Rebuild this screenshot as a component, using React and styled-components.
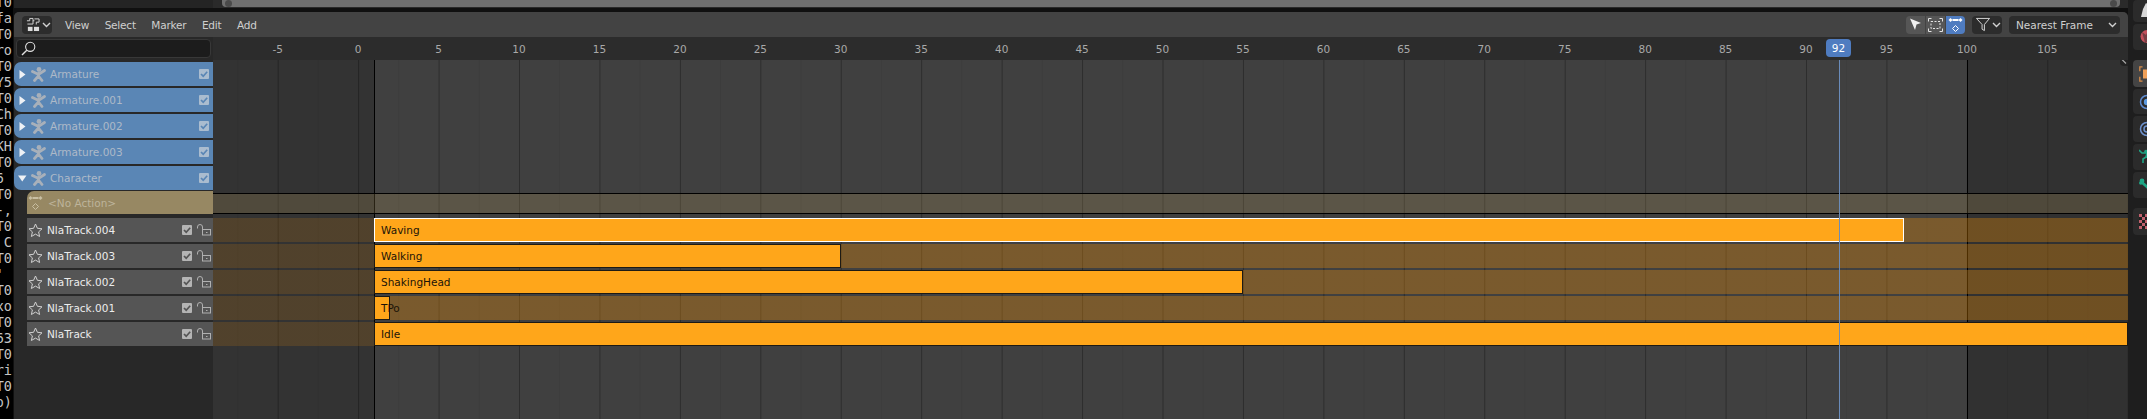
import React from 'react';
import styled, { createGlobalStyle } from 'styled-components';

const FRAME = 16.09;
const RANGE_START = 161;
const RANGE_END = 1754;

const GlobalStyle = createGlobalStyle`
  html, body {
    margin: 0;
    background: #000;
    overflow: hidden;
  }
`;

const Page = styled.div`
  display: flex;
  width: 2147px;
  height: 419px;
  overflow: hidden;
  font-family: 'DejaVu Sans', sans-serif;
  font-size: 10.5px;
  background: #101010;
`;

const Terminal = styled.div`
  flex: 0 0 13px;
  margin-top: -6px;
  overflow: hidden;
  background: #000;
  font-family: 'DejaVu Sans Mono', monospace;
  font-size: 13.5px;
  line-height: 16px;
  color: #c4c4c4;
`;

const TermLine = styled.div`
  display: flex;
  justify-content: flex-end;
  padding-right: 1px;
  white-space: pre;
  color: ${(p) => p.$color || 'inherit'};
`;

const Workspace = styled.div`
  flex: 0 0 2115px;
  display: flex;
  flex-direction: column;
  padding-left: 1px;
  box-sizing: border-box;
`;

const TopStrip = styled.div`
  flex: 0 0 8px;
  display: flex;
  background: #2a2a2a;
  margin-bottom: 4px;
`;

const TopStripLeft = styled.div`
  flex: 0 0 199px;
  background: #242424;
`;

const ScrollTrack = styled.div`
  flex: 1;
  padding: 0 8px 1px 9px;
`;

const ScrollPill = styled.div`
  display: flex;
  justify-content: space-between;
  align-items: center;
  height: 7px;
  padding: 0 3px;
  background: #707070;
  border-radius: 0 0 4px 4px;
`;

const ScrollHandle = styled.span`
  width: 7px;
  height: 7px;
  border-radius: 50%;
  background: #4a4a4a;
`;

const Editor = styled.div`
  flex: 1;
  display: flex;
  flex-direction: column;
  min-height: 0;
  border-radius: 5px 5px 0 0;
  overflow: hidden;
  background: #282828;
`;

const Header = styled.header`
  flex: 0 0 25px;
  display: flex;
  align-items: center;
  justify-content: space-between;
  padding: 0 8px;
  background: #434343;
`;

const HeaderGroup = styled.div`
  display: flex;
  align-items: center;
`;

const DarkButton = styled.div`
  display: flex;
  align-items: center;
  gap: 2px;
  height: 18px;
  padding: 0 1px 0 4px;
  border-radius: 4px;
  background: #2c2c2c;
  color: #d0d0d0;
`;

const Menu = styled.nav`
  display: flex;
  gap: 15.5px;
  margin-left: 13px;
  letter-spacing: -0.2px;
  color: #cfcfcf;
`;

const ModeGroup = styled.div`
  display: flex;
  gap: 1px;
  margin-right: 7px;
`;

const ModeButton = styled.div`
  width: 19px;
  height: 18px;
  display: flex;
  align-items: center;
  justify-content: center;
  background: ${(p) => (p.$active ? '#4f7cc0' : '#565656')};
  border-radius: ${(p) => (p.$first ? '4px 0 0 4px' : p.$last ? '0 4px 4px 0' : '0')};
`;

const Dropdown = styled(DarkButton)`
  width: 111px;
  box-sizing: border-box;
  justify-content: space-between;
  margin-left: 7px;
  padding: 0 3px 0 7px;
`;

const Main = styled.div`
  flex: 1;
  min-height: 0;
  display: grid;
  grid-template-columns: 199px 1fr;
  grid-template-rows: 23px 1fr;
`;

const SearchCell = styled.div`
  padding: 2px;
  background: #282828;
`;

const SearchField = styled.div`
  display: flex;
  align-items: center;
  box-sizing: border-box;
  height: 19px;
  padding-left: 4px;
  background: #1c1c1c;
  border: 1px solid #383838;
  border-radius: 4px;
`;

const Ruler = styled.div`
  position: relative;
  display: flex;
  padding-left: 24.5px;
  overflow: hidden;
  background: #2c2c2c;
`;

const RulerLabel = styled.span`
  flex: 0 0 ${FRAME * 5}px;
  display: flex;
  align-items: center;
  justify-content: center;
  color: #a9a9a9;
`;

const FrameBadge = styled.div`
  position: absolute;
  left: 1613px;
  top: 2px;
  width: 25px;
  height: 18px;
  display: flex;
  align-items: center;
  justify-content: center;
  border-radius: 4px;
  background: #4f7cc0;
  color: #fff;
`;

const Channels = styled.div`
  display: flex;
  flex-direction: column;
  gap: 2px;
  padding-top: 2px;
  background: #282828;
`;

const ChannelRow = styled.div`
  display: flex;
  align-items: center;
  flex: 0 0 24px;
  box-sizing: border-box;
`;

const ObjectRow = styled(ChannelRow)`
  padding: 0 4px 0 4px;
  background: #5a86b5;
  color: #adb9c8;
  border-radius: 7px 0 0 7px;
`;

const ActionRow = styled(ChannelRow)`
  flex-basis: 23px;
  margin: -1px 0 2px 13px;
  padding-left: 1px;
  background: #978863;
  color: #bdb49b;
  border-radius: 7px 0 0 0;
`;

const TrackRow = styled(ChannelRow)`
  margin-left: 13px;
  padding: 0 2px 0 1px;
  background: #555;
  color: #ececec;
`;

const Disclosure = styled.span`
  flex: 0 0 13px;
  display: flex;
  align-items: center;
`;

const RowIcon = styled.span`
  flex: 0 0 ${(p) => p.$w}px;
  display: flex;
  align-items: center;
`;

const RowName = styled.span`
  flex: 1;
  white-space: nowrap;
`;

const LockSlot = styled.span`
  display: flex;
  margin-left: 5px;
`;

const Timeline = styled.div`
  position: relative;
  display: flex;
  flex-direction: column;
  gap: 2px;
  padding-top: 133px;
  overflow: hidden;
  background:
    linear-gradient(90deg,
      transparent ${RANGE_START}px, #000 ${RANGE_START}px, #000 ${RANGE_START + 1}px, transparent ${RANGE_START + 1}px,
      transparent ${RANGE_END}px, #000 ${RANGE_END}px, #000 ${RANGE_END + 1}px, transparent ${RANGE_END + 1}px),
    linear-gradient(90deg, rgba(0, 0, 0, 0.3) 1px, transparent 1px) 64.7px 0 / ${FRAME * 5}px 100%,
    linear-gradient(90deg, rgba(0, 0, 0, 0.06) 1px, transparent 1px) 24.4px 0 / ${FRAME * 5}px 100%,
    linear-gradient(90deg,
      #333 ${RANGE_START}px, #404040 ${RANGE_START}px,
      #404040 ${RANGE_END}px, #313131 ${RANGE_END}px);
`;

const ActionBand = styled.div`
  flex: 0 0 21px;
  box-sizing: border-box;
  margin-bottom: 2px;
  border-top: 1px solid #000;
  border-bottom: 1px solid #000;
  background: rgba(200, 170, 100, 0.2);
`;

const TrackBand = styled.div`
  flex: 0 0 24px;
  background: linear-gradient(90deg,
    rgba(255, 150, 0, 0.145) ${RANGE_START}px,
    rgba(255, 150, 0, 0.3) ${RANGE_START}px);
`;

const Strip = styled.div`
  box-sizing: border-box;
  height: 24px;
  margin-left: ${RANGE_START}px;
  padding-left: 6px;
  display: flex;
  align-items: center;
  white-space: nowrap;
  background: #ffa61a;
  color: #1c1408;
  border: 1px solid ${(p) => (p.$selected ? '#fff' : '#1d1a14')};
`;

const Playhead = styled.div`
  position: absolute;
  left: 1626px;
  top: 0;
  bottom: 0;
  width: 1px;
  background: #6a8cba;
`;

const SidebarTab = styled.div`
  position: absolute;
  right: 0;
  top: -7px;
  width: 8px;
  height: 13px;
  display: flex;
  align-items: center;
  justify-content: center;
  border-radius: 4px 0 0 4px;
  background: #222;
`;

const PropTabs = styled.div`
  flex: 1;
  display: flex;
  flex-direction: column;
  gap: 2px;
  padding-left: 5px;
  background: #1e1e1e;
  overflow: hidden;
`;

const PropTab = styled.div`
  flex: 0 0 ${(p) => p.$h || 26}px;
  display: flex;
  align-items: center;
  padding-left: 6px;
  margin-top: ${(p) => p.$gap || 0}px;
  border-radius: 4px 0 0 4px;
  background: ${(p) => (p.$active ? '#444' : '#2b2b2b')};
`;

const Chevron = ({ color = '#d0d0d0' }) => (
  <svg width="9" height="6" viewBox="0 0 9 6">
    <path d="M1 1l3.5 3.5L8 1" fill="none" stroke={color} strokeWidth="1.4" />
  </svg>
);

const NlaIcon = () => (
  <svg width="14" height="15" viewBox="0 0 15 15" fill="none" stroke="#dcdcdc">
    <path d="M1 3.5h3V1h3.500v6H1.500M7.500 3.500H9M9 1.500h5V5H11v2.500" />
    <rect x="2" y="10" width="5" height="4.500" fill="#dcdcdc" stroke="none" />
    <rect x="8.500" y="10" width="5.500" height="4.500" fill="#dcdcdc" stroke="none" />
  </svg>
);

const SearchIcon = () => (
  <svg width="15" height="15" viewBox="0 0 15 15" fill="none" stroke="#e0e0e0" strokeWidth="1.1">
    <circle cx="9.200" cy="5.800" r="4.600" />
    <path d="M5.800 9.200L1 14" strokeWidth="1.400" />
  </svg>
);

const Triangle = ({ open }) => (
  <svg width="9" height="9" viewBox="0 0 9 9">
    <path d={open ? 'M0 1.500h8.500L4.250 7.500z' : 'M1.500 0l6 4.500-6 4.500z'} fill="#eef1f5" />
  </svg>
);

const ArmatureIcon = () => (
  <svg width="15" height="15" viewBox="0 0 15 15" fill="none" stroke="#a8b0ba" strokeWidth="2.800" strokeLinecap="round">
    <circle cx="8" cy="2.500" r="2.400" fill="#a8b0ba" stroke="none" />
    <path d="M1.500 4.500L7.500 7.500 13.500 3.500" />
    <path d="M7.500 6.500v2.500L3.500 13.500M7.500 9l3.500 4.500" />
  </svg>
);

const ActionIcon = ({ color, size = 15 }) => (
  <svg width={size} height={size} viewBox="0 0 15 15" fill={color}>
    <path d="M2.500 1l2 2-2 2-2-2zM12.500 1l2 2-2 2-2-2z" />
    <rect x="4.500" y="2" width="6" height="2" />
    <path d="M7.500 8.500l3 3-3 3-3-3z" fill="none" stroke={color} />
  </svg>
);

const StarIcon = () => (
  <svg width="15" height="15" viewBox="0 0 15 15">
    <path d="M7.500 1l1.900 4.300 4.600.5-3.400 3.100 1 4.600-4.100-2.400-4.100 2.400 1-4.600L1 5.800l4.600-.5z" fill="none" stroke="#d0d0d0" />
  </svg>
);

const CheckBox = ({ bg, mark }) => (
  <svg width="10" height="10" viewBox="0 0 10 10">
    <rect width="10" height="10" rx="1" fill={bg} />
    <path d="M2 5l2.200 2.200L8.200 2.800" fill="none" stroke={mark} strokeWidth="1.700" />
  </svg>
);

const LockIcon = () => (
  <svg width="14" height="12" viewBox="0 0 14 12" fill="none" stroke="#b0b0b0">
    <rect x="5.500" y="5.500" width="8" height="5.500" />
    <path d="M.5 4.500V3A2.500 2.500 0 0 1 5.500 3v2.500" />
    <rect x="9" y="8" width="1.500" height="1" fill="#b0b0b0" stroke="none" />
  </svg>
);

const CursorIcon = () => (
  <svg width="13" height="13" viewBox="0 0 13 13">
    <path d="M1 .5l11 4.500-4.500 1.500L6 12z" fill="#f0f0f0" />
  </svg>
);

const BoxSelectIcon = () => (
  <svg width="15" height="14" viewBox="0 0 15 14" fill="none" stroke="#e4e4e4">
    <path d="M.5 3.500v-3h3M11.500.5h3v3M14.500 10.500v3h-3M3.500 13.500h-3v-3" />
    <path d="M3 3.500h9v7H3z" strokeDasharray="2 1.500" />
  </svg>
);

const FunnelIcon = () => (
  <svg width="14" height="15" viewBox="0 0 15 15" fill="none" stroke="#e0e0e0">
    <path d="M.5 1h14L9 7.500V14L6.500 12.500V7.500z" />
  </svg>
);

const SideChevron = () => (
  <svg width="6" height="9" viewBox="0 0 6 9">
    <path d="M5 .5L1 4.500 5 8.500" fill="none" stroke="#a8a8a8" strokeWidth="1.200" />
  </svg>
);

const ToolTabIcon = () => (
  <svg width="16" height="16" viewBox="0 0 16 16" style={{ flexShrink: 0 }}>
    <path d="M2 14l2-8 3-6 4 3-2 4 2 3-2 4z" fill="#d8d8d8" />
  </svg>
);

const WorldTabIcon = () => (
  <svg width="16" height="16" viewBox="0 0 16 16" style={{ flexShrink: 0 }}>
    <circle cx="8" cy="7.500" r="6.500" fill="#c4505c" />
    <path d="M3 3l4 3 2-4 3 3-3 3 2 3-5 3-1-4z" fill="#2b2b2b" opacity="0.5" />
  </svg>
);

const ObjectTabIcon = () => (
  <svg width="16" height="16" viewBox="0 0 16 16" style={{ flexShrink: 0 }}>
    <rect x="4" y="3.500" width="12" height="9" fill="#f0a058" />
    <path d="M3.500 .8H.8v4.400M.8 10.800v4.400h2.700" fill="none" stroke="#d88c48" strokeWidth="1.300" />
  </svg>
);

const ModifierTabIcon = () => (
  <svg width="16" height="16" viewBox="0 0 16 16" style={{ flexShrink: 0 }}>
    <circle cx="8" cy="8" r="6.500" fill="none" stroke="#5d8ad0" strokeWidth="1.500" />
    <circle cx="8" cy="8" r="3.200" fill="#5d9ae0" />
  </svg>
);

const ConstraintTabIcon = () => (
  <svg width="16" height="16" viewBox="0 0 16 16" style={{ flexShrink: 0 }}>
    <circle cx="8" cy="8" r="6.500" fill="none" stroke="#6f93cf" strokeWidth="1.500" />
    <circle cx="8" cy="8" r="3" fill="none" stroke="#6f93cf" strokeWidth="1.500" />
  </svg>
);

const PoseTabIcon = () => (
  <svg width="16" height="16" viewBox="0 0 16 16" fill="none" stroke="#1fa585" strokeWidth="1.600" style={{ flexShrink: 0 }}>
    <circle cx="7" cy="2.500" r="1.800" fill="#1fa585" stroke="none" />
    <path d="M0 1l3 3h5l-1 4-3 2v4M7 8l5 1" />
  </svg>
);

const BoneTabIcon = () => (
  <svg width="16" height="16" viewBox="0 0 16 16" fill="none" stroke="#1fa585" style={{ flexShrink: 0 }}>
    <path d="M2.500 5L11 12.500" strokeWidth="2.800" />
    <circle cx="3" cy="4" r="2.400" fill="#1fa585" stroke="none" />
    <circle cx="1.800" cy="6" r="1.800" fill="#1fa585" stroke="none" />
  </svg>
);

const CheckerTabIcon = () => (
  <svg width="16" height="16" viewBox="0 0 16 16" style={{ flexShrink: 0 }}>
    <rect width="16" height="15" fill="#c0606c" />
    <path d="M3 0h3v3H3zM0 3h3v3H0zM6 3h3v3H6zM3 6h3v3H3zM0 9h3v3H0zM6 9h3v3H6zM3 12h3v3H3z" fill="#1e1e1e" />
  </svg>
);

const termLines = [
  'T0', 'fa', 'T0', 'ro', 'T0', 'Y5', 'T0', 'Ch', 'T0', 'KH', 'T0', '6 ', 'T0', '-,',
  'T0', ' C', 'T0', "' ", 'T0', 'xo', 'T0', '63', 'T0', 'ri', 'T0', 'o)',
];

const rulerLabels = [-5, 0, 5, 10, 15, 20, 25, 30, 35, 40, 45, 50, 55, 60, 65, 70, 75, 80, 85, 90, 95, 100, 105];

const objects = ['Armature', 'Armature.001', 'Armature.002', 'Armature.003', 'Character'];

const tracks = [
  { name: 'NlaTrack.004', strip: 'Waving', end: 96.1, selected: true },
  { name: 'NlaTrack.003', strip: 'Walking', end: 30 },
  { name: 'NlaTrack.002', strip: 'ShakingHead', end: 55 },
  { name: 'NlaTrack.001', strip: 'TPo', end: 2 },
  { name: 'NlaTrack', strip: 'Idle', end: 110 },
];

const tabs = [
  { Icon: ToolTabIcon, h: 22 },
  { Icon: WorldTabIcon },
  { Icon: ObjectTabIcon, gap: 8, h: 27, active: true },
  { Icon: ModifierTabIcon, h: 25 },
  { Icon: ConstraintTabIcon },
  { Icon: PoseTabIcon },
  { Icon: BoneTabIcon },
  { Icon: CheckerTabIcon, gap: 8, h: 27 },
];

const App = () => (
  <Page>
    <GlobalStyle />
    <Terminal>
      {termLines.map((line, i) => (
        <TermLine key={i}>{line}</TermLine>
      ))}
      <TermLine $color="#c0392b">.</TermLine>
    </Terminal>

    <Workspace>
      <TopStrip>
        <TopStripLeft />
        <ScrollTrack>
          <ScrollPill>
            <ScrollHandle />
            <ScrollHandle />
          </ScrollPill>
        </ScrollTrack>
      </TopStrip>

      <Editor>
        <Header>
          <HeaderGroup>
            <DarkButton>
              <NlaIcon />
              <Chevron />
            </DarkButton>
            <Menu>
              <span>View</span>
              <span>Select</span>
              <span>Marker</span>
              <span>Edit</span>
              <span>Add</span>
            </Menu>
          </HeaderGroup>
          <HeaderGroup>
            <ModeGroup>
              <ModeButton $first>
                <CursorIcon />
              </ModeButton>
              <ModeButton>
                <BoxSelectIcon />
              </ModeButton>
              <ModeButton $last $active>
                <ActionIcon color="#fff" />
              </ModeButton>
            </ModeGroup>
            <DarkButton>
              <FunnelIcon />
              <Chevron />
            </DarkButton>
            <Dropdown>
              <span>Nearest Frame</span>
              <Chevron />
            </Dropdown>
          </HeaderGroup>
        </Header>

        <Main>
          <SearchCell>
            <SearchField>
              <SearchIcon />
            </SearchField>
          </SearchCell>
          <Ruler>
            {rulerLabels.map((frame) => (
              <RulerLabel key={frame}>{frame}</RulerLabel>
            ))}
            <FrameBadge>92</FrameBadge>
          </Ruler>

          <Channels>
            {objects.map((name, i) => (
              <ObjectRow key={name}>
                <Disclosure>
                  <Triangle open={i === objects.length - 1} />
                </Disclosure>
                <RowIcon $w={19}>
                  <ArmatureIcon />
                </RowIcon>
                <RowName>{name}</RowName>
                <CheckBox bg="#aabccf" mark="#5a86b5" />
              </ObjectRow>
            ))}
            <ActionRow>
              <RowIcon $w={20}>
                <ActionIcon color="#c9bfa3" />
              </RowIcon>
              <RowName>&lt;No Action&gt;</RowName>
            </ActionRow>
            {tracks.map((track) => (
              <TrackRow key={track.name}>
                <RowIcon $w={19}>
                  <StarIcon />
                </RowIcon>
                <RowName>{track.name}</RowName>
                <CheckBox bg="#b4b4b4" mark="#555" />
                <LockSlot>
                  <LockIcon />
                </LockSlot>
              </TrackRow>
            ))}
          </Channels>

          <Timeline>
            <ActionBand />
            {tracks.map((track) => (
              <TrackBand key={track.name}>
                <Strip $selected={track.selected} style={{ width: (track.end - 1) * FRAME }}>
                  {track.strip}
                </Strip>
              </TrackBand>
            ))}
            <Playhead />
            <SidebarTab>
              <SideChevron />
            </SidebarTab>
          </Timeline>
        </Main>
      </Editor>
    </Workspace>

    <PropTabs>
      {tabs.map(({ Icon, h, gap, active }, i) => (
        <PropTab key={i} $h={h} $gap={gap} $active={active}>
          <Icon />
        </PropTab>
      ))}
    </PropTabs>
  </Page>
);

export default App;
